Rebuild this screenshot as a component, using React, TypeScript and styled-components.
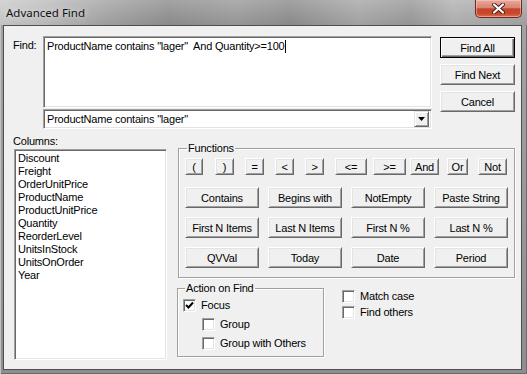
import styled, { createGlobalStyle, css } from 'styled-components';

const GlobalStyle = createGlobalStyle`
  html, body {
    margin: 0;
    padding: 0;
  }
  body {
    width: 527px;
    height: 374px;
    overflow: hidden;
    background: #9a9a9a;
  }
`;

const sunken = css`
  box-sizing: border-box;
  background: #fff;
  border: 1px solid;
  border-color: #a0a0a0 #fff #fff #a0a0a0;
  box-shadow: inset 1px 1px 0 #696969, inset -1px -1px 0 #e3e3e3;
`;

const ScWindow = styled.div`
  width: 527px;
  height: 374px;
  box-sizing: border-box;
  display: flex;
  flex-direction: column;
  background: linear-gradient(to bottom, #a4a4a4, #8e8e8e);
  box-shadow: inset 1px 0 0 #c2c2c2, inset -1px 0 0 #6e6e6e, inset 0 -1px 0 #6a6a6a;
  font-family: 'Liberation Sans', Arial, sans-serif;
  font-size: 11px;
  letter-spacing: -0.2px;
  color: #000;
`;

const ScTitleBar = styled.div`
  height: 25px;
  flex: none;
  display: flex;
  align-items: flex-start;
  background:
    linear-gradient(to bottom, rgba(255, 255, 255, 0.18), rgba(0, 0, 0, 0.04)),
    linear-gradient(
      to right,
      #cbcbcb 0%,
      #bdbdbd 9%,
      #a4a4a4 20%,
      #8f8f8f 32%,
      #9b9b9b 45%,
      #8e8e8e 55%,
      #a7a7a7 68%,
      #9a9a9a 78%,
      #b2b2b2 86%,
      #a3a3a3 100%
    );
`;

const ScTitle = styled.div`
  padding: 5px 0 0 6px;
  font-family: 'Noto Sans', 'Open Sans', sans-serif;
  font-size: 11.5px;
  line-height: 15px;
  letter-spacing: 0;
  color: #111;
  text-shadow: 0 0 6px rgba(255, 255, 255, 0.8);
`;

const ScClose = styled.div`
  margin-left: auto;
  margin-right: 5px;
  width: 47px;
  height: 18px;
  box-sizing: border-box;
  display: flex;
  align-items: center;
  justify-content: center;
  border: 1px solid #6b2a1e;
  border-top: none;
  border-radius: 0 0 5px 5px;
  background: linear-gradient(to bottom, #e8aa9c 0%, #d98472 45%, #c4452b 52%, #c8482d 80%, #e07052 100%);
  box-shadow: inset 0 0 0 1px rgba(255, 220, 210, 0.45);
`;

const ScClient = styled.div`
  flex: 1;
  margin: 0 5px 4px 3px;
  border: 1px solid #4e4e4e;
  background: #f0f0f0;
  padding: 10px 0 0 9px;
  display: flex;
  flex-direction: column;
`;

const ScTopRow = styled.div`
  display: grid;
  grid-template-columns: 22px 389px 75px;
  column-gap: 8px;
`;

const ScLabel = styled.div`
  line-height: 13px;
  padding-top: 3px;
  white-space: nowrap;
`;

const ScFields = styled.div`
  display: flex;
  flex-direction: column;
  gap: 1px;
`;

const ScEdit = styled.div`
  ${sunken};
  height: 72px;
  padding: 3px 3px;
  line-height: 13px;
  white-space: pre;
`;

const ScCaret = styled.span`
  display: inline-block;
  width: 1px;
  height: 13px;
  vertical-align: top;
  background: #000;
`;

const ScCombo = styled.div`
  ${sunken};
  height: 20px;
  display: flex;
  align-items: center;
  padding: 0 2px 0 3px;
  line-height: 13px;
  white-space: pre;
`;

const ScComboText = styled.span`
  flex: 1;
`;

const ScDropButton = styled.div`
  width: 15px;
  height: 16px;
  box-sizing: border-box;
  display: flex;
  align-items: center;
  justify-content: center;
  background: #f0f0f0;
  border: 1px solid;
  border-color: #e3e3e3 #696969 #696969 #e3e3e3;
  box-shadow: inset 1px 1px 0 #fff, inset -1px -1px 0 #a0a0a0;
`;

const ScButtonColumn = styled.div`
  padding-top: 1px;
  display: flex;
  flex-direction: column;
  gap: 6px;
`;

const ScButton = styled.button<{ $w?: number; $h?: number; $ml?: number; $default?: boolean }>`
  box-sizing: border-box;
  width: ${(p) => (p.$w ? `${p.$w}px` : '100%')};
  height: ${(p) => p.$h ?? 21}px;
  margin: 0 0 0 ${(p) => p.$ml ?? 0}px;
  padding: 0;
  flex: none;
  font: inherit;
  letter-spacing: inherit;
  color: #000;
  background: #f0f0f0;
  white-space: nowrap;
  ${(p) =>
    p.$default
      ? css`
          border: 1px solid #000;
          box-shadow: inset 1px 1px 0 #fff, inset -1px -1px 0 #696969, inset -2px -2px 0 #a0a0a0;
        `
      : css`
          border: 1px solid;
          border-color: #fff #696969 #696969 #fff;
          box-shadow: inset 1px 1px 0 #e3e3e3, inset -1px -1px 0 #a0a0a0;
        `}
`;

const ScBottom = styled.div`
  margin-top: 6px;
  display: grid;
  grid-template-columns: 154px 338px;
  column-gap: 10px;
`;

const ScColumns = styled.div`
  display: flex;
  flex-direction: column;
`;

const ScColumnsLabel = styled.div`
  line-height: 13px;
  margin-bottom: 1px;
`;

const ScList = styled.ul`
  ${sunken};
  margin: 0 0 0 1px;
  width: 153px;
  height: 211px;
  padding: 2px 3px;
  list-style: none;
  line-height: 13px;
`;

const ScRight = styled.div`
  display: flex;
  flex-direction: column;
`;

const ScGroup = styled.fieldset<{ $w: number }>`
  box-sizing: border-box;
  width: ${(p) => p.$w}px;
  margin: 0;
  min-width: 0;
  border: 1px solid #a0a0a0;
  box-shadow: inset 1px 1px 0 #fff, 1px 1px 0 #fff;
`;

const ScFunctions = styled(ScGroup)`
  margin: 7px 0 0 1px;
  padding: 3px 6px 9px 6px;
`;

const ScLegend = styled.legend`
  padding: 0 1px;
  margin-left: 2px;
  line-height: 13px;
`;

const ScOpRow = styled.div`
  display: flex;
`;

const ScFuncGrid = styled.div`
  margin-top: 12px;
  display: grid;
  grid-template-columns: repeat(4, 74px);
  grid-auto-rows: 21px;
  column-gap: 9px;
  row-gap: 9px;
`;

const ScActionRow = styled.div`
  margin-top: 4px;
  display: flex;
  align-items: flex-start;
`;

const ScAction = styled(ScGroup)`
  padding: 4px 6px 6px 5px;
  display: flex;
  flex-direction: column;
  gap: 6px;
`;

const ScOptions = styled.div`
  margin: 8px 0 0 18px;
  display: flex;
  flex-direction: column;
  gap: 3px;
`;

const ScCheckRow = styled.label<{ $indent?: number }>`
  display: flex;
  align-items: center;
  gap: 5px;
  height: 13px;
  line-height: 13px;
  padding-left: ${(p) => p.$indent ?? 0}px;
  white-space: nowrap;
`;

const ScBox = styled.span`
  ${sunken};
  width: 13px;
  height: 13px;
  flex: none;
  display: flex;
  align-items: center;
  justify-content: center;
`;

const columns = [
  'Discount',
  'Freight',
  'OrderUnitPrice',
  'ProductName',
  'ProductUnitPrice',
  'Quantity',
  'ReorderLevel',
  'UnitsInStock',
  'UnitsOnOrder',
  'Year',
];

const operators = [
  { label: '(', w: 18, ml: 0 },
  { label: ')', w: 19, ml: 12 },
  { label: '=', w: 19, ml: 11 },
  { label: '<', w: 19, ml: 11 },
  { label: '>', w: 19, ml: 11 },
  { label: '<=', w: 32, ml: 11 },
  { label: '>=', w: 33, ml: 6 },
  { label: 'And', w: 29, ml: 4 },
  { label: 'Or', w: 21, ml: 8 },
  { label: 'Not', w: 29, ml: 10 },
];

const functions = [
  'Contains',
  'Begins with',
  'NotEmpty',
  'Paste String',
  'First N Items',
  'Last N Items',
  'First N %',
  'Last N %',
  'QVVal',
  'Today',
  'Date',
  'Period',
];

const CheckBox = ({ label, checked = false, indent }: { label: string; checked?: boolean; indent?: number }) => (
  <ScCheckRow $indent={indent}>
    <ScBox>
      {checked && (
        <svg width="9" height="9" viewBox="0 0 9 9">
          <polyline points="1,4 3.5,6.5 8,1.5" fill="none" stroke="#000" strokeWidth="2" />
        </svg>
      )}
    </ScBox>
    {label}
  </ScCheckRow>
);

export default function App() {
  return (
    <>
      <GlobalStyle />
      <ScWindow>
        <ScTitleBar>
          <ScTitle>Advanced Find</ScTitle>
          <ScClose>
            <svg width="13" height="11" viewBox="0 0 13 11">
              <path d="M2 1.5 L11 9.5 M11 1.5 L2 9.5" stroke="#4a1c14" strokeWidth="4" strokeLinecap="round" />
              <path d="M2 1.5 L11 9.5 M11 1.5 L2 9.5" stroke="#fff" strokeWidth="2.2" strokeLinecap="round" />
            </svg>
          </ScClose>
        </ScTitleBar>
        <ScClient>
          <ScTopRow>
            <ScLabel>Find:</ScLabel>
            <ScFields>
              <ScEdit>
                {'ProductName contains "lager"  And Quantity>=100'}
                <ScCaret />
              </ScEdit>
              <ScCombo>
                <ScComboText>{'ProductName contains "lager"'}</ScComboText>
                <ScDropButton>
                  <svg width="7" height="4" viewBox="0 0 7 4">
                    <polygon points="0,0 7,0 3.5,4" fill="#000" />
                  </svg>
                </ScDropButton>
              </ScCombo>
            </ScFields>
            <ScButtonColumn>
              <ScButton $default>Find All</ScButton>
              <ScButton>Find Next</ScButton>
              <ScButton>Cancel</ScButton>
            </ScButtonColumn>
          </ScTopRow>
          <ScBottom>
            <ScColumns>
              <ScColumnsLabel>Columns:</ScColumnsLabel>
              <ScList>
                {columns.map((c) => (
                  <li key={c}>{c}</li>
                ))}
              </ScList>
            </ScColumns>
            <ScRight>
              <ScFunctions $w={337}>
                <ScLegend>Functions</ScLegend>
                <ScOpRow>
                  {operators.map((o) => (
                    <ScButton key={o.label} $w={o.w} $h={17} $ml={o.ml}>
                      {o.label}
                    </ScButton>
                  ))}
                </ScOpRow>
                <ScFuncGrid>
                  {functions.map((f) => (
                    <ScButton key={f}>{f}</ScButton>
                  ))}
                </ScFuncGrid>
              </ScFunctions>
              <ScActionRow>
                <ScAction $w={147}>
                  <ScLegend>Action on Find</ScLegend>
                  <CheckBox label="Focus" checked />
                  <CheckBox label="Group" indent={19} />
                  <CheckBox label="Group with Others" indent={19} />
                </ScAction>
                <ScOptions>
                  <CheckBox label="Match case" />
                  <CheckBox label="Find others" />
                </ScOptions>
              </ScActionRow>
            </ScRight>
          </ScBottom>
        </ScClient>
      </ScWindow>
    </>
  );
}
